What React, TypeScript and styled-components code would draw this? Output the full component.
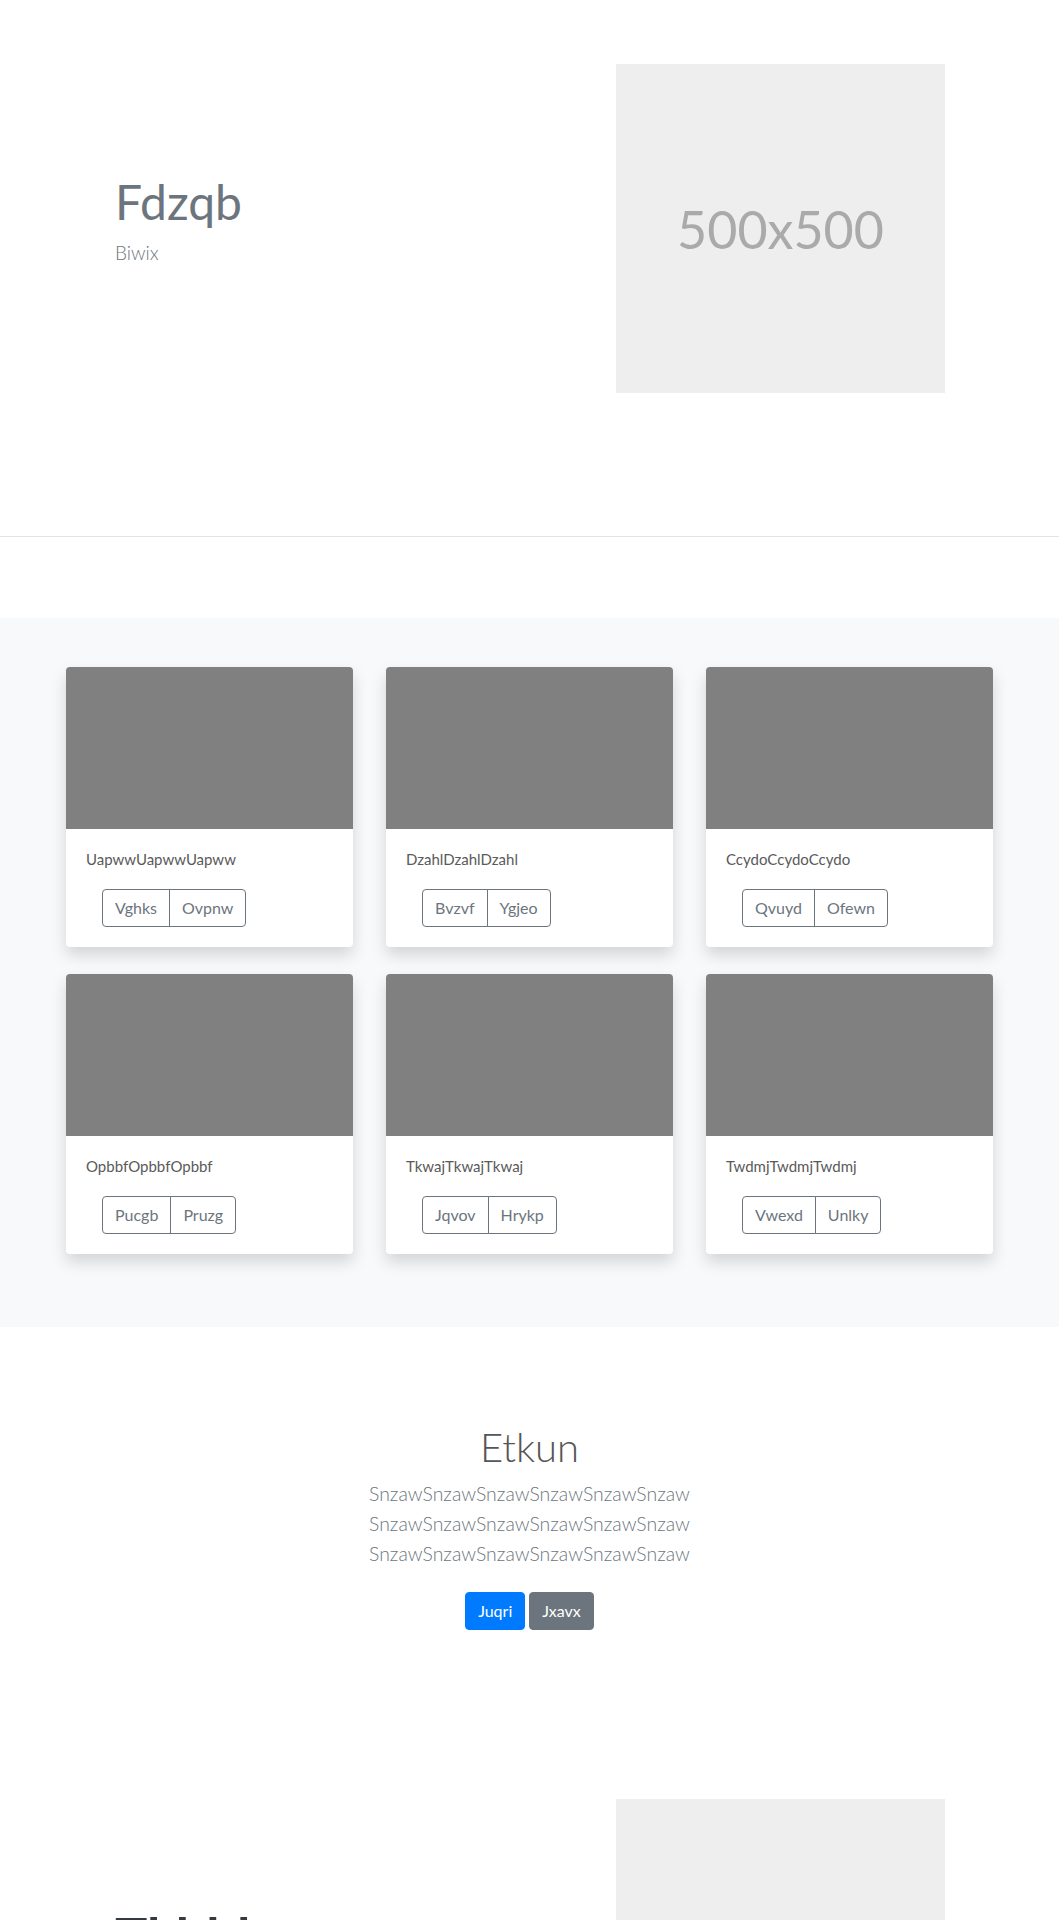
import React from "react";
import styled, { createGlobalStyle } from "styled-components";

const Global = createGlobalStyle`
  html, body { margin: 0; padding: 0; background: #fff; }
  body {
    font-family: "Segoe UI", Lato, "Noto Sans", sans-serif;
    color: #212529;
    font-size: 16px;
    line-height: 1.5;
  }
  * { box-sizing: border-box; }
`;

const Hero = styled.section`
  display: flex;
  align-items: center;
  padding: 64px 114px 143px 115px;
`;

const HeroText = styled.div`
  flex: 1;
`;

const HeroTitle = styled.h1<{ $dark?: boolean }>`
  margin: 0 0 8px;
  font-size: ${(p) => (p.$dark ? 54 : 48)}px;
  line-height: 1.2;
  font-weight: ${(p) => (p.$dark ? 700 : 400)};
  color: ${(p) => (p.$dark ? "#343a40" : "#6c757d")};
`;

const HeroSub = styled.p`
  margin: 0 0 16px;
  font-size: 19px;
  font-weight: 300;
  color: #6c757d;
`;

const HeroMedia = styled.div`
  flex: 1;
  display: flex;
  justify-content: flex-end;
`;

const Placeholder = styled.div`
  width: 329px;
  height: 329px;
  background: #eeeeee;
  color: #aaaaaa;
  display: flex;
  align-items: center;
  justify-content: center;
  font-size: 52px;
  font-weight: 400;
`;

const Rule = styled.hr`
  margin: 0;
  border: 0;
  border-top: 1px solid #e3e3e3;
`;

const Spacer = styled.div<{ $h: number }>`
  height: ${(p) => p.$h}px;
`;

const Gallery = styled.section`
  background: #f8f9fa;
  padding: 49px 0 73px;
`;

const CardGrid = styled.div`
  width: 927px;
  margin: 0 auto;
  display: grid;
  grid-template-columns: repeat(3, 1fr);
  column-gap: 33px;
  row-gap: 27px;
`;

const Card = styled.div`
  background: #fff;
  border-radius: 4px;
  overflow: hidden;
  box-shadow: 0 8px 16px rgba(0, 0, 0, 0.15);
`;

const CardImage = styled.div`
  height: 162px;
  background: #808080;
`;

const CardBody = styled.div`
  padding: 20px;
`;

const CardText = styled.p`
  margin: 0 0 19px;
  font-size: 15px;
  line-height: 21px;
  font-weight: 400;
  color: #5a5a5a;
`;

const ButtonGroup = styled.div`
  display: inline-flex;
  margin-left: 16px;
`;

const OutlineButton = styled.button`
  font-family: inherit;
  font-size: 16px;
  line-height: 24px;
  padding: 6px 12px;
  background: transparent;
  color: #6c757d;
  border: 1px solid #6c757d;
  border-radius: 0;
  cursor: pointer;
  &:first-child {
    border-radius: 4px 0 0 4px;
  }
  &:last-child {
    border-radius: 0 4px 4px 0;
    margin-left: -1px;
  }
`;

const Feature = styled.section`
  padding: 96px 0 105px;
  text-align: center;
`;

const FeatureTitle = styled.h2`
  margin: 0 0 8px;
  font-size: 40px;
  line-height: 48px;
  font-weight: 300;
  color: #555;
`;

const Lead = styled.p`
  margin: 0 auto 23px;
  max-width: 480px;
  font-size: 19.4px;
  line-height: 30px;
  font-weight: 300;
  color: #6c757d;
`;

const Actions = styled.div`
  display: flex;
  justify-content: center;
  gap: 4px;
`;

const SolidButton = styled.button<{ $variant: "primary" | "secondary" }>`
  font-family: inherit;
  font-size: 16px;
  line-height: 24px;
  padding: 6px 12px;
  border-radius: 4px;
  border: 1px solid ${(p) => (p.$variant === "primary" ? "#007bff" : "#6c757d")};
  background: ${(p) => (p.$variant === "primary" ? "#007bff" : "#6c757d")};
  color: #fff;
  cursor: pointer;
`;

const cards = [
  { text: "UapwwUapwwUapww", a: "Vghks", b: "Ovpnw" },
  { text: "DzahlDzahlDzahl", a: "Bvzvf", b: "Ygjeo" },
  { text: "CcydoCcydoCcydo", a: "Qvuyd", b: "Ofewn" },
  { text: "OpbbfOpbbfOpbbf", a: "Pucgb", b: "Pruzg" },
  { text: "TkwajTkwajTkwaj", a: "Jqvov", b: "Hrykp" },
  { text: "TwdmjTwdmjTwdmj", a: "Vwexd", b: "Unlky" },
];

export default function App() {
  return (
    <>
      <Global />
      <Hero>
        <HeroText>
          <HeroTitle>Fdzqb</HeroTitle>
          <HeroSub>Biwix</HeroSub>
        </HeroText>
        <HeroMedia>
          <Placeholder>500x500</Placeholder>
        </HeroMedia>
      </Hero>
      <Rule />
      <Spacer $h={81} />
      <Gallery>
        <CardGrid>
          {cards.map((c) => (
            <Card key={c.text}>
              <CardImage />
              <CardBody>
                <CardText>{c.text}</CardText>
                <ButtonGroup>
                  <OutlineButton>{c.a}</OutlineButton>
                  <OutlineButton>{c.b}</OutlineButton>
                </ButtonGroup>
              </CardBody>
            </Card>
          ))}
        </CardGrid>
      </Gallery>
      <Feature>
        <FeatureTitle>Etkun</FeatureTitle>
        <Lead>
          SnzawSnzawSnzawSnzawSnzawSnzaw SnzawSnzawSnzawSnzawSnzawSnzaw
          SnzawSnzawSnzawSnzawSnzawSnzaw
        </Lead>
        <Actions>
          <SolidButton $variant="primary">Juqri</SolidButton>
          <SolidButton $variant="secondary">Jxavx</SolidButton>
        </Actions>
      </Feature>
      <Hero>
        <HeroText>
          <HeroTitle $dark>Tkhbl</HeroTitle>
          <HeroSub>Qmfra</HeroSub>
        </HeroText>
        <HeroMedia>
          <Placeholder>500x500</Placeholder>
        </HeroMedia>
      </Hero>
    </>
  );
}
